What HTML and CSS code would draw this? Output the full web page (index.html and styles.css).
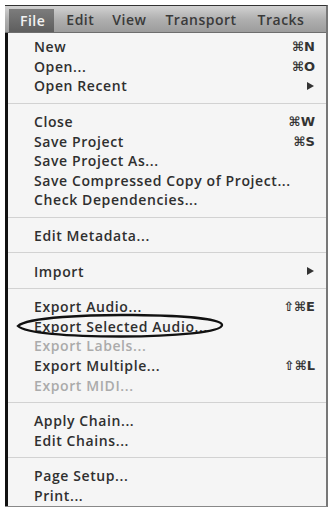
FILE: index.html
```html
<!DOCTYPE html>
<html>
<head>
<meta charset="utf-8">
<link rel="stylesheet" href="styles.css">
</head>
<body>
<div class="frame">
  <div class="menubar">
    <span class="mb-item active">File</span>
    <span class="mb-item">Edit</span>
    <span class="mb-item">View</span>
    <span class="mb-item">Transport</span>
    <span class="mb-item">Tracks</span>
  </div>
  <div class="menu">
    <div class="group">
      <div class="item"><span>New</span><span class="sc">⌘N</span></div>
      <div class="item"><span>Open...</span><span class="sc">⌘O</span></div>
      <div class="item"><span>Open Recent</span><span class="arrow"></span></div>
    </div>
    <div class="group">
      <div class="item"><span>Close</span><span class="sc">⌘W</span></div>
      <div class="item"><span>Save Project</span><span class="sc">⌘S</span></div>
      <div class="item"><span>Save Project As...</span></div>
      <div class="item"><span>Save Compressed Copy of Project...</span></div>
      <div class="item"><span>Check Dependencies...</span></div>
    </div>
    <div class="group">
      <div class="item"><span>Edit Metadata...</span></div>
    </div>
    <div class="group">
      <div class="item"><span>Import</span><span class="arrow"></span></div>
    </div>
    <div class="group">
      <div class="item"><span>Export Audio...</span><span class="sc">⇧⌘E</span></div>
      <div class="item circled"><span>Export Selected Audio...</span>
        <svg class="ellipse" width="212" height="26" viewBox="0 0 212 26"><path d="M3 13 C 12 4, 75 1.5, 118 2 C 170 2.5, 207 6, 207 12 C 207 19, 160 23.5, 106 23.5 C 52 23.5, 10 20, 3 13 Z" fill="none" stroke="#111" stroke-width="2.4"/></svg>
      </div>
      <div class="item disabled"><span>Export Labels...</span></div>
      <div class="item"><span>Export Multiple...</span><span class="sc">⇧⌘L</span></div>
      <div class="item disabled"><span>Export MIDI...</span></div>
    </div>
    <div class="group">
      <div class="item"><span>Apply Chain...</span></div>
      <div class="item"><span>Edit Chains...</span></div>
    </div>
    <div class="group last">
      <div class="item"><span>Page Setup...</span></div>
      <div class="item"><span>Print...</span></div>
    </div>
  </div>
</div>
</body>
</html>
```
FILE: styles.css
```css
html, body {
  margin: 0;
  padding: 0;
  background: #ffffff;
}
body {
  width: 331px;
  height: 512px;
  padding: 5px 3px 0 5px;
  box-sizing: border-box;
  font-family: "Open Sans", "DejaVu Sans", sans-serif;
}
.frame {
  width: 323px;
  height: 502px;
  border-top: 1px solid #333;
  border-right: 2px solid #777;
  border-bottom: 1px solid #888;
  box-sizing: border-box;
  background: #f5f5f5;
  display: flex;
  flex-direction: column;
  overflow: hidden;
}
.menubar {
  flex: none;
  height: 27px;
  display: flex;
  align-items: stretch;
  background: linear-gradient(#d2d2d2, #b0b0b0 50%, #9c9c9c);
  border-bottom: 1px solid #6e6e6e;
  padding-left: 4px;
  box-sizing: border-box;
}
.mb-item {
  display: flex;
  align-items: center;
  font-size: 14px;
  font-weight: 600;
  letter-spacing: 0.5px;
  color: #3a3a3a;
  padding: 0 9px;
}
.mb-item.active {
  background: linear-gradient(#7c7c7c, #5e5e5e);
  color: #f2f2f2;
  margin-top: 3px;
  padding: 0 9px 0 11px;
  margin-right: 3px;
}
.mb-item:nth-child(2) { padding-left: 9px; }
.mb-item:nth-child(3) { padding-left: 9px; }
.mb-item:nth-child(4) { padding-left: 10px; }
.mb-item:nth-child(5) { padding-left: 12px; }
.menu {
  flex: 1;
  border-left: 3px solid #111;
  display: flex;
  flex-direction: column;
  overflow: hidden;
}
.group {
  flex: none;
  border-bottom: 1px solid #d2d2d2;
  padding: 8px 0 7px;
}
.group:first-child {
  padding-top: 4px;
}
.group.last {
  border-bottom: none;
}
.item {
  position: relative;
  height: 19.6px;
  display: flex;
  align-items: center;
  justify-content: space-between;
  padding: 0 11px 0 26px;
  font-size: 14px;
  font-weight: 600;
  letter-spacing: 0.6px;
  color: #2f2f2f;
}
.item.disabled {
  color: #ababab;
}
.sc {
  font-family: "DejaVu Sans", sans-serif;
  font-size: 13px;
  font-weight: bold;
  letter-spacing: 0;
  color: #333;
}
.arrow {
  width: 0;
  height: 0;
  border-top: 4.5px solid transparent;
  border-bottom: 4.5px solid transparent;
  border-left: 7px solid #333;
  margin-right: 1px;
}
.ellipse {
  position: absolute;
  left: 7px;
  top: -4px;
}
```
